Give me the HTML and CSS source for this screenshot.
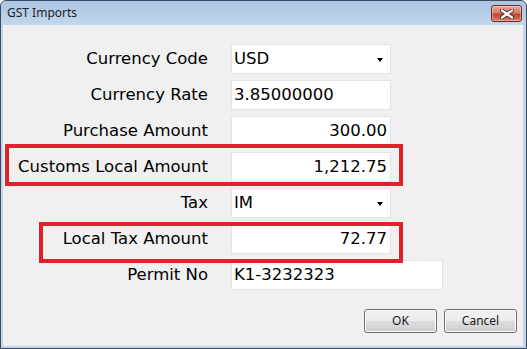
FILE: index.html
```html
<!DOCTYPE html>
<html>
<head>
<meta charset="utf-8">
<link rel="stylesheet" href="styles.css">
</head>
<body>
<div class="window">
  <div class="titlebar">
    <span class="title">GST Imports</span>
    <span class="close">
      <svg width="16" height="10" viewBox="0 0 16 10">
        <path d="M3 1.5 L13 8.5 M13 1.5 L3 8.5" stroke="#4a2a28" stroke-width="4" stroke-linecap="round"/>
        <path d="M3 1.5 L13 8.5 M13 1.5 L3 8.5" stroke="#ffffff" stroke-width="2.2" stroke-linecap="round"/>
      </svg>
    </span>
  </div>
  <div class="client">
    <div class="fields">
      <div class="label">Currency Code</div>
      <div class="box combo"><span>USD</span><i class="arrow"></i></div>

      <div class="label">Currency Rate</div>
      <div class="box">3.85000000</div>

      <div class="label">Purchase Amount</div>
      <div class="box num">300.00</div>

      <div class="label">Customs Local Amount</div>
      <div class="box num">1,212.75</div>

      <div class="label">Tax</div>
      <div class="box combo"><span>IM</span><i class="arrow"></i></div>

      <div class="label">Local Tax Amount</div>
      <div class="box num">72.77</div>

      <div class="label">Permit No</div>
      <div class="box wide">K1-3232323</div>
    </div>
    <div class="buttons">
      <span class="btn">OK</span>
      <span class="btn">Cancel</span>
    </div>
    <div class="mark mark-customs"></div>
    <div class="mark mark-tax"></div>
  </div>
</div>
</body>
</html>
```
FILE: styles.css
```css
html, body {
  margin: 0;
  padding: 0;
  background: #ffffff;
}

.window {
  width: 525px;
  height: 347px;
  border: 1px solid #3b4a5e;
  border-radius: 6px 6px 0 0;
  background: #c2d7ee;
  display: flex;
  flex-direction: column;
  font-family: "DejaVu Sans", Verdana, sans-serif;
}

.titlebar {
  height: 24px;
  display: flex;
  justify-content: space-between;
  align-items: flex-start;
  background: linear-gradient(#a9c4e2, #c2d7ee);
  border-radius: 6px 6px 0 0;
}

.title {
  font-family: "Noto Sans", "Open Sans", sans-serif;
  font-size: 12px;
  color: #1e1e1e;
  margin: 5px 0 0 6px;
  line-height: 14px;
}

.close {
  width: 29px;
  height: 15px;
  margin: 4px 4px 0 0;
  border: 1px solid #6e2b25;
  border-radius: 3px;
  background: linear-gradient(#e9a899 0%, #d47a68 45%, #c1452f 55%, #d87e66 100%);
  display: flex;
  align-items: center;
  justify-content: center;
  box-shadow: inset 0 0 0 1px rgba(255,255,255,0.35);
}

.client {
  position: relative;
  flex: 1;
  margin: 0 3px 2px 2px;
  background: #f0f0f0;
  display: flex;
  flex-direction: column;
}

.fields {
  display: grid;
  grid-template-columns: 205px auto;
  column-gap: 23px;
  row-gap: 6px;
  padding-top: 19px;
  justify-items: start;
}

.label {
  justify-self: end;
  font-size: 16.5px;
  line-height: 30px;
  color: #000;
}

.box {
  box-sizing: border-box;
  width: 160px;
  height: 30px;
  background: #ffffff;
  border: 1px solid #e3e3e3;
  padding: 0 3px 0 2px;
  font-size: 16.5px;
  line-height: 28px;
  color: #000;
  white-space: nowrap;
}

.num {
  text-align: right;
}

.wide {
  width: 212px;
}

.combo {
  display: flex;
  justify-content: space-between;
  align-items: center;
  padding-right: 7px;
}

.arrow {
  width: 0;
  height: 0;
  border-left: 3.5px solid transparent;
  border-right: 3.5px solid transparent;
  border-top: 4px solid #000;
  margin-top: 2px;
}

.buttons {
  display: flex;
  justify-content: flex-end;
  gap: 7px;
  margin: 19px 6px 0 0;
}

.btn {
  box-sizing: border-box;
  width: 73px;
  height: 24px;
  border: 1px solid #707070;
  border-radius: 3px;
  background: linear-gradient(#f2f2f2 0%, #ebebeb 48%, #dddddd 52%, #cfcfcf 100%);
  box-shadow: inset 0 0 0 1px #fcfcfc;
  font-family: "Noto Sans", "Open Sans", sans-serif;
  font-size: 12px;
  line-height: 22px;
  text-align: center;
  color: #1a1a1a;
}

.mark {
  position: absolute;
  border: 4px solid #e0202b;
  box-sizing: border-box;
}

.mark-customs {
  left: 2px;
  top: 119px;
  width: 398px;
  height: 42px;
}

.mark-tax {
  left: 36px;
  top: 197px;
  width: 364px;
  height: 41px;
}
```
